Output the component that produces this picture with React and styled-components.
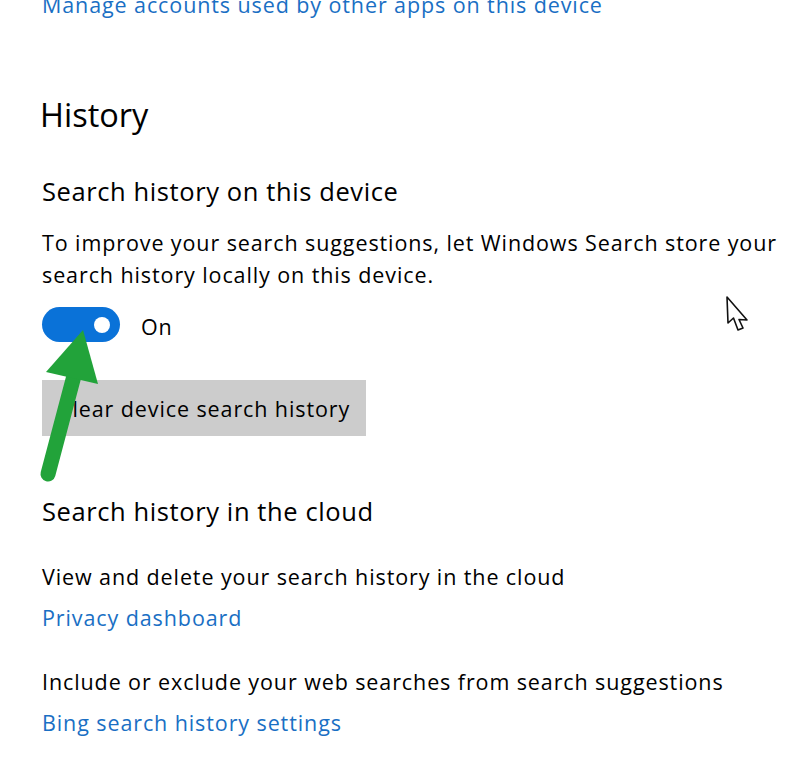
import React from 'react'
import styled, { createGlobalStyle } from 'styled-components'

const GlobalStyle = createGlobalStyle`
  html, body {
    margin: 0;
    padding: 0;
    background: #ffffff;
  }
  body {
    font-family: 'Open Sans', 'Liberation Sans', Arial, sans-serif;
    color: #000000;
    overflow: hidden;
  }
`

const Page = styled.div`
  position: relative;
  width: 800px;
  height: 759px;
  overflow: hidden;
  padding-left: 42px;
  box-sizing: border-box;
`
const Link = styled.a`
  display: block;
  color: #1a6fc4;
  font-size: 21.5px;
  letter-spacing: 0.9px;
  line-height: 32px;
  text-decoration: none;
  cursor: pointer;
  margin-top: ${(p) => p.$mt || 0}px;
`
const Heading = styled.h2`
  margin: 72px 0 0 -2px;
  font-size: 32.5px;
  font-weight: 400;
  line-height: 44px;
`
const SubHeading = styled.h3`
  margin: ${(p) => p.$mt}px 0 0 0;
  font-size: 25.5px;
  letter-spacing: 0.6px;
  font-weight: 400;
  line-height: 34px;
`
const Text = styled.p`
  margin: ${(p) => p.$mt}px 0 0 0;
  font-size: 21.5px;
  letter-spacing: 0.9px;
  line-height: 32px;
  max-width: 750px;
`
const ToggleRow = styled.div`
  display: flex;
  align-items: center;
  gap: 21px;
  margin-top: 16px;
  height: 35px;
`
const Toggle = styled.div`
  width: 78px;
  height: 35px;
  border-radius: 18px;
  background: #0a72d8;
  display: flex;
  align-items: center;
  justify-content: flex-end;
  padding-right: 10px;
  box-sizing: border-box;
`
const Thumb = styled.div`
  width: 16px;
  height: 16px;
  border-radius: 50%;
  background: #ffffff;
`
const ToggleLabel = styled.span`
  font-size: 21.5px;
  letter-spacing: 0.9px;
  padding-top: 4px;
`
const Button = styled.button`
  display: block;
  margin-top: 38px;
  width: 324px;
  height: 56px;
  border: none;
  background: #cccccc;
  font-family: inherit;
  font-size: 21.5px;
  letter-spacing: 0.9px;
  color: #000000;
  text-align: left;
  padding: 0 0 0 16px;
`
const Overlay = styled.svg`
  position: absolute;
  left: 0;
  top: 0;
  pointer-events: none;
`

export default function App() {
  return (
    <>
      <GlobalStyle />
      <Page>
        <Link $mt={-11}>Manage accounts used by other apps on this device</Link>
        <Heading>History</Heading>
        <SubHeading $mt={37}>Search history on this device</SubHeading>
        <Text $mt={19}>
          To improve your search suggestions, let Windows Search store your
          search history locally on this device.
        </Text>
        <ToggleRow>
          <Toggle>
            <Thumb />
          </Toggle>
          <ToggleLabel>On</ToggleLabel>
        </ToggleRow>
        <Button>Clear device search history</Button>
        <SubHeading $mt={58}>Search history in the cloud</SubHeading>
        <Text $mt={33}>View and delete your search history in the cloud</Text>
        <Link $mt={9}>Privacy dashboard</Link>
        <Text $mt={32}>Include or exclude your web searches from search suggestions</Text>
        <Link $mt={9}>Bing search history settings</Link>

        <Overlay width="800" height="759" viewBox="0 0 800 759">
          <line x1="75" y1="372" x2="48" y2="474" stroke="#22a33a" strokeWidth="15" strokeLinecap="round" />
          <polygon points="83,330 46,372 98,384" fill="#22a33a" />
          <path
            d="M727 297 L728 323 L733.5 318 L738 330 L743 328 L739 319.5 L747 320 Z"
            fill="#ffffff"
            stroke="#111111"
            strokeWidth="1.6"
            strokeLinejoin="round"
          />
        </Overlay>
      </Page>
    </>
  )
}
